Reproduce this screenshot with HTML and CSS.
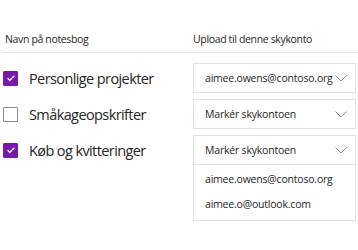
FILE: index.html
```html
<!DOCTYPE html>
<html lang="da">

<head>
    <meta charset="UTF-8">
    <meta name="viewport" content="width=device-width, initial-scale=1.0">
    <title>Upload notesbøger</title>
    <link rel="stylesheet" href="styles.css">
</head>

<body>
    <div class="header">
        <div class="col-name">Navn på notesbog</div>
        <div class="col-account">Upload til denne skykonto</div>
    </div>

    <div class="rows">
        <div class="row">
            <label class="notebook">
                <span class="check checked">
                    <svg viewBox="0 0 16 16" width="10" height="10"><path d="M2.5 8.5l3.5 3.2 7.5-7.4" fill="none" stroke="#fff" stroke-width="2"/></svg>
                </span>
                Personlige projekter
            </label>
            <div class="account">
                <div class="select">
                    <span>aimee.owens@contoso.org</span>
                    <svg class="chevron" viewBox="0 0 12 7" width="12" height="7"><path d="M0.5 0.5l5.5 5.5 5.5-5.5" fill="none" stroke="#8a8a8a" stroke-width="1"/></svg>
                </div>
            </div>
        </div>

        <div class="row">
            <label class="notebook">
                <span class="check"></span>
                Småkageopskrifter
            </label>
            <div class="account">
                <div class="select">
                    <span>Markér skykontoen</span>
                    <svg class="chevron" viewBox="0 0 12 7" width="12" height="7"><path d="M0.5 0.5l5.5 5.5 5.5-5.5" fill="none" stroke="#8a8a8a" stroke-width="1"/></svg>
                </div>
            </div>
        </div>

        <div class="row">
            <label class="notebook">
                <span class="check checked">
                    <svg viewBox="0 0 16 16" width="10" height="10"><path d="M2.5 8.5l3.5 3.2 7.5-7.4" fill="none" stroke="#fff" stroke-width="2"/></svg>
                </span>
                Køb og kvitteringer
            </label>
            <div class="account">
                <div class="select">
                    <span>Markér skykontoen</span>
                    <svg class="chevron" viewBox="0 0 12 7" width="12" height="7"><path d="M0.5 0.5l5.5 5.5 5.5-5.5" fill="none" stroke="#8a8a8a" stroke-width="1"/></svg>
                </div>
                <ul class="options">
                    <li>aimee.owens@contoso.org</li>
                    <li>aimee.o@outlook.com</li>
                </ul>
            </div>
        </div>
    </div>
</body>

</html>
```

FILE: styles.css
```css
body {
    margin: 0;
    background: #fff;
    color: #262626;
    font-family: "Open Sans", "Noto Sans", sans-serif;
    overflow: hidden;
}

/* Column headings */
.header {
    display: flex;
    margin-left: 2px;
    padding: 32px 0 6px;
    border-bottom: 1px solid #e6e6e6;
    font-size: 10.5px;
    line-height: 14px;
    letter-spacing: -0.35px;
}

.col-name {
    width: 191px;
    padding-left: 3px;
    box-sizing: border-box;
}

.rows {
    display: flex;
    flex-direction: column;
    gap: 6px;
    margin-top: 10px;
}

.row {
    display: flex;
    align-items: flex-start;
}

.notebook {
    width: 193px;
    height: 30px;
    display: flex;
    align-items: center;
    gap: 11px;
    padding-left: 3px;
    box-sizing: border-box;
    font-size: 14.5px;
    letter-spacing: -0.6px;
}

.check {
    width: 15px;
    height: 15px;
    box-sizing: border-box;
    border: 1px solid #8a8a8a;
    border-radius: 1px;
    display: flex;
    justify-content: center;
    align-items: center;
    flex-shrink: 0;
}

.check.checked {
    background: #7719aa;
    border-color: #7719aa;
}

.account {
    width: 163px;
}

.select {
    height: 30px;
    box-sizing: border-box;
    border: 1px solid #e1e1e1;
    display: flex;
    align-items: center;
    justify-content: space-between;
    padding: 0 8px 0 11px;
    font-size: 10.5px;
    letter-spacing: -0.2px;
}

.chevron {
    display: block;
}

.options {
    list-style: none;
    margin: 0;
    padding: 2px 0 3px;
    border: 1px solid #e1e1e1;
    border-top: none;
    font-size: 10.5px;
    letter-spacing: -0.2px;
}

.options li {
    height: 25px;
    line-height: 25px;
    padding-left: 11px;
}
```
